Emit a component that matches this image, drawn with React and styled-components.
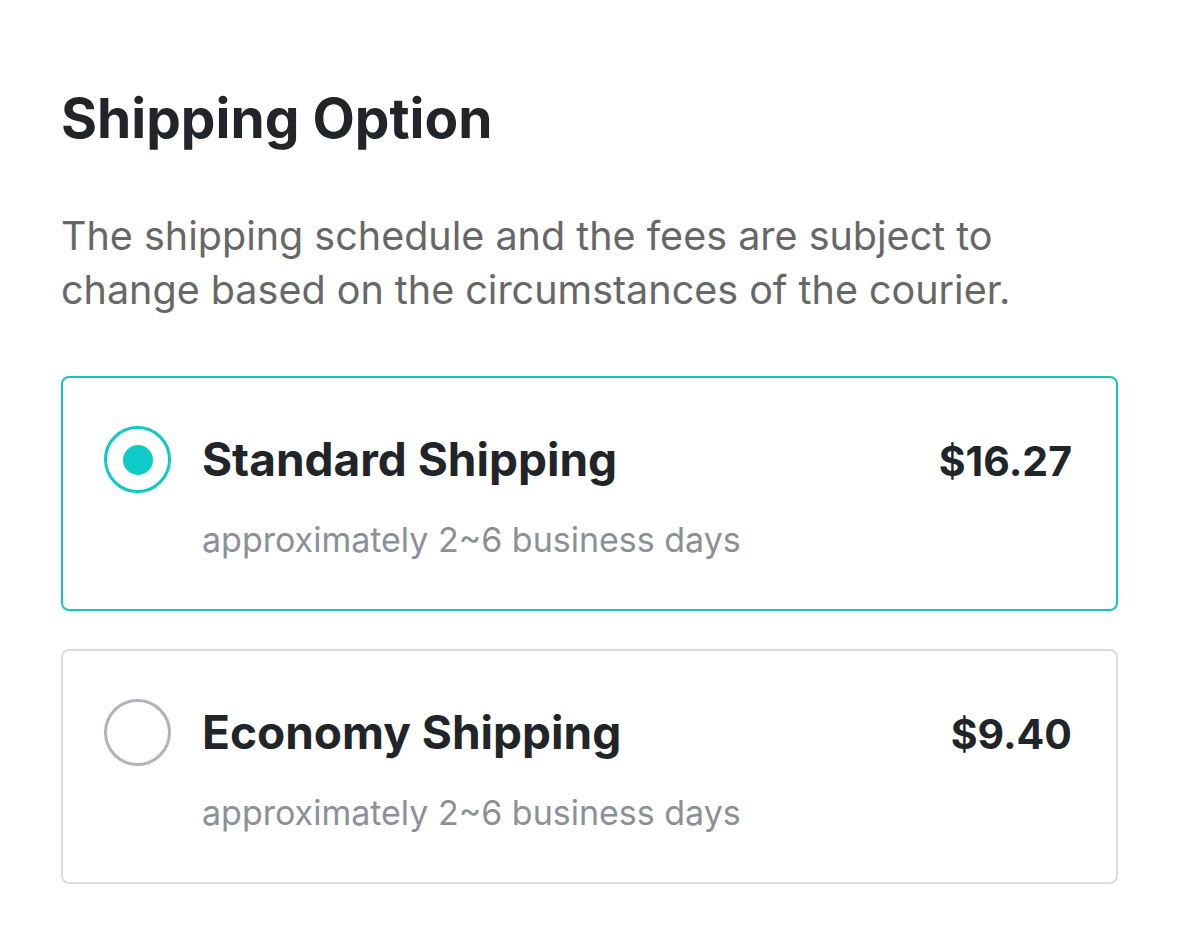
import styled, { createGlobalStyle } from 'styled-components';

const GlobalStyle = createGlobalStyle`
	body {
		margin: 0;
		background: #fff;
		font-family: Inter, "Noto Sans", sans-serif;
	}
`;

const options = [
	{ id: 'standard', title: 'Standard Shipping', price: '$16.27', note: 'approximately 2~6 business days' },
	{ id: 'economy', title: 'Economy Shipping', price: '$9.40', note: 'approximately 2~6 business days' },
];

const Page = styled.div`
	padding: 82px 61px 60px;
	width: 1179px;
	box-sizing: border-box;
`;

const Heading = styled.h2`
	margin: 0;
	font-size: 55px;
	font-weight: 700;
	line-height: 72px;
	color: #212529;
`;

const Lead = styled.p`
	margin: 55px 0 0;
	font-size: 39.5px;
	line-height: 54px;
	color: #676767;
	max-width: 1000px;
`;

const List = styled.div`
	display: flex;
	flex-direction: column;
	gap: 38px;
	margin-top: 59px;
`;

const Card = styled.label`
	display: flex;
	align-items: flex-start;
	gap: 31px;
	height: 235px;
	box-sizing: border-box;
	padding: 48px 44px 0 41px;
	border: 2px solid ${({ $active }) => ($active ? '#19c1bd' : '#dcdcdc')};
	border-radius: 8px;
	cursor: pointer;
`;

const Radio = styled.span`
	flex: none;
	width: 67px;
	height: 67px;
	box-sizing: border-box;
	border-radius: 50%;
	border: 3px solid ${({ $active }) => ($active ? '#0fc9c6' : '#b0b4ba')};
	display: flex;
	align-items: center;
	justify-content: center;

	&::after {
		content: '';
		width: 30px;
		height: 30px;
		border-radius: 50%;
		background: #0fcbc8;
		display: ${({ $active }) => ($active ? 'block' : 'none')};
	}
`;

const Body = styled.div`
	flex: 1;
	display: flex;
	flex-direction: column;
`;

const TitleRow = styled.div`
	display: flex;
	justify-content: space-between;
	align-items: baseline;
`;

const Title = styled.span`
	font-size: 46px;
	font-weight: 700;
	line-height: 66px;
	color: #212529;
`;

const Price = styled.span`
	font-size: 41px;
	font-weight: 700;
	color: #212529;
`;

const Note = styled.span`
	margin-top: 28px;
	font-size: 34px;
	line-height: 40px;
	color: #8b9098;
`;

export default function App() {
	return (
		<Page>
			<GlobalStyle />
			<Heading>Shipping Option</Heading>
			<Lead>
				The shipping schedule and the fees are subject to change based on the circumstances of the courier.
			</Lead>
			<List>
				{options.map((o, i) => (
					<Card key={o.id} $active={i === 0}>
						<Radio $active={i === 0} />
						<Body>
							<TitleRow>
								<Title>{o.title}</Title>
								<Price>{o.price}</Price>
							</TitleRow>
							<Note>{o.note}</Note>
						</Body>
					</Card>
				))}
			</List>
		</Page>
	);
}
